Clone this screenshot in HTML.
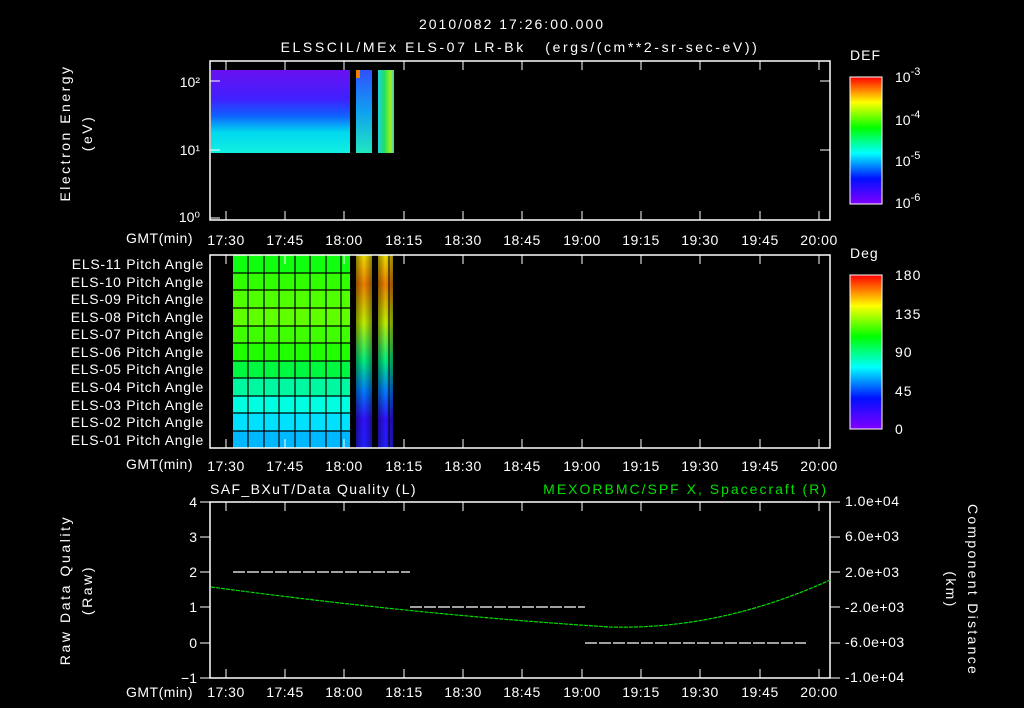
<!DOCTYPE html>
<html><head><style>
html,body{margin:0;padding:0;background:#000;width:1024px;height:708px;overflow:hidden}
svg text{font-family:"Liberation Sans",sans-serif;fill:#fff;font-size:14px}
</style></head><body>
<svg width="1024" height="708" viewBox="0 0 1024 708" xmlns="http://www.w3.org/2000/svg">
<defs>
<linearGradient id="rb" x1="0" y1="1" x2="0" y2="0">
<stop offset="0" stop-color="#8000ff"/><stop offset="0.2" stop-color="#0010ff"/>
<stop offset="0.4" stop-color="#00ffff"/><stop offset="0.6" stop-color="#00ff00"/>
<stop offset="0.8" stop-color="#ffff00"/><stop offset="1" stop-color="#ff0000"/>
</linearGradient>
<linearGradient id="p1" x1="0" y1="0" x2="0" y2="1">
<stop offset="0" stop-color="#6a10f0"/><stop offset="0.35" stop-color="#4020ff"/>
<stop offset="0.55" stop-color="#1060ff"/><stop offset="0.75" stop-color="#00d8f0"/>
<stop offset="1" stop-color="#10f0e0"/>
</linearGradient>
<linearGradient id="p1b" x1="0" y1="0" x2="0" y2="1">
<stop offset="0" stop-color="#3050ff"/><stop offset="0.5" stop-color="#10a0f0"/>
<stop offset="1" stop-color="#20e8c0"/>
</linearGradient>
<linearGradient id="p1c" x1="0" y1="0" x2="1" y2="0">
<stop offset="0" stop-color="#20d0e0"/><stop offset="0.4" stop-color="#20e060"/>
<stop offset="0.8" stop-color="#a0f020"/><stop offset="1" stop-color="#20d0f0"/>
</linearGradient>
<linearGradient id="s2" x1="0" y1="0" x2="0" y2="1">
<stop offset="0" stop-color="#f0e000"/><stop offset="0.15" stop-color="#f08000"/>
<stop offset="0.35" stop-color="#c0f000"/><stop offset="0.55" stop-color="#00f080"/>
<stop offset="0.7" stop-color="#0080ff"/><stop offset="0.85" stop-color="#3010ff"/>
<stop offset="1" stop-color="#2020ff"/>
</linearGradient>
<linearGradient id="sh" x1="0" y1="0" x2="1" y2="0">
<stop offset="0" stop-color="#000" stop-opacity="0.4"/><stop offset="0.5" stop-color="#000" stop-opacity="0"/>
<stop offset="1" stop-color="#000" stop-opacity="0.4"/>
</linearGradient>
</defs>

<text x="512" y="29" text-anchor="middle" font-size="16" letter-spacing="2">2010/082 17:26:00.000</text>
<text x="520" y="52" text-anchor="middle" font-size="16" letter-spacing="2.6" xml:space="preserve">ELSSCIL/MEx ELS-07 LR-Bk   (ergs/(cm**2-sr-sec-eV))</text>

<!-- Panel 1 -->
<rect x="211" y="70" width="139" height="83" fill="url(#p1)"/>
<rect x="356" y="70" width="16" height="83" fill="url(#p1b)"/>
<rect x="356" y="70" width="4" height="8" fill="#f08000"/>
<rect x="378" y="70" width="16" height="83" fill="url(#p1c)"/>
<rect x="210" y="61" width="620" height="159" fill="none" stroke="#fff" stroke-width="1.5"/>
<text x="200" y="87" text-anchor="end">10²</text>
<text x="200" y="155" text-anchor="end">10¹</text>
<text x="200" y="222" text-anchor="end">10⁰</text>
<text transform="translate(70,133) rotate(-90)" text-anchor="middle" font-size="15" letter-spacing="2.5">Electron Energy</text>
<text transform="translate(92,133) rotate(-90)" text-anchor="middle" font-size="15" letter-spacing="2.5">(eV)</text>
<text x="850" y="60" font-size="15" letter-spacing="1">DEF</text>
<rect x="850" y="77" width="32" height="127" fill="url(#rb)" stroke="#fff"/>
<g font-size="15">
<text x="895" y="82">10<tspan dy="-7" font-size="11">-3</tspan></text>
<text x="895" y="125">10<tspan dy="-7" font-size="11">-4</tspan></text>
<text x="895" y="166">10<tspan dy="-7" font-size="11">-5</tspan></text>
<text x="895" y="208">10<tspan dy="-7" font-size="11">-6</tspan></text>
</g>

<!-- Panel 2 -->
<g>
<rect x="233" y="255" width="117" height="193" fill="#20ff00"/>
<rect x="233" y="255" width="117" height="18" fill="#10ff10"/>
<rect x="233" y="273" width="117" height="17" fill="#30ff00"/>
<rect x="233" y="290" width="117" height="18" fill="#50ff00"/>
<rect x="233" y="308" width="117" height="18" fill="#60ff00"/>
<rect x="233" y="326" width="117" height="17" fill="#40ff00"/>
<rect x="233" y="343" width="117" height="18" fill="#20ff00"/>
<rect x="233" y="361" width="117" height="17" fill="#00f840"/>
<rect x="233" y="378" width="117" height="18" fill="#00f8a0"/>
<rect x="233" y="396" width="117" height="17" fill="#00ffe0"/>
<rect x="233" y="413" width="117" height="18" fill="#00e0ff"/>
<rect x="233" y="431" width="117" height="17" fill="#00b8ff"/>
<g stroke="#000" stroke-width="1.2">
<path d="M248 255V448M264 255V448M279 255V448M295 255V448M310 255V448M326 255V448M341 255V448"/>
<path d="M233 273H350M233 290H350M233 308H350M233 326H350M233 343H350M233 361H350M233 378H350M233 396H350M233 413H350M233 431H350"/>
</g>
<rect x="356" y="255" width="16" height="193" fill="url(#s2)"/>
<rect x="378" y="255" width="15" height="193" fill="url(#s2)"/>
<rect x="356" y="255" width="16" height="193" fill="url(#sh)"/>
<rect x="378" y="255" width="15" height="193" fill="url(#sh)"/>
<path d="M389 255V448" stroke="#000" stroke-width="1"/>
</g>
<rect x="210" y="255" width="620" height="193" fill="none" stroke="#fff" stroke-width="1.5"/>
<g text-anchor="end" font-size="13" letter-spacing="0.7">
<text x="204" y="269">ELS-11 Pitch Angle</text>
<text x="204" y="287">ELS-10 Pitch Angle</text>
<text x="204" y="304">ELS-09 Pitch Angle</text>
<text x="204" y="322">ELS-08 Pitch Angle</text>
<text x="204" y="339">ELS-07 Pitch Angle</text>
<text x="204" y="357">ELS-06 Pitch Angle</text>
<text x="204" y="374">ELS-05 Pitch Angle</text>
<text x="204" y="392">ELS-04 Pitch Angle</text>
<text x="204" y="410">ELS-03 Pitch Angle</text>
<text x="204" y="427">ELS-02 Pitch Angle</text>
<text x="204" y="445">ELS-01 Pitch Angle</text>
</g>
<text x="850" y="258" font-size="15" letter-spacing="1">Deg</text>
<rect x="850" y="275" width="32" height="154" fill="url(#rb)" stroke="#fff"/>
<g font-size="15" letter-spacing="1">
<text x="895" y="280">180</text>
<text x="895" y="319">135</text>
<text x="895" y="357">90</text>
<text x="895" y="396">45</text>
<text x="895" y="434">0</text>
</g>

<!-- Panel 3 -->
<text x="210" y="494" font-size="15" letter-spacing="1.4">SAF_BXuT/Data Quality (L)</text>
<text x="828" y="494" text-anchor="end" font-size="15" letter-spacing="2" style="fill:#00e000">MEXORBMC/SPF X, Spacecraft (R)</text>
<rect x="210" y="502" width="620" height="176" fill="none" stroke="#fff" stroke-width="1.5"/>
<g text-anchor="end">
<text x="197" y="507">4</text><text x="197" y="542">3</text><text x="197" y="577">2</text>
<text x="197" y="612">1</text><text x="197" y="648">0</text><text x="197" y="683">−1</text>
</g>
<path d="M200 502H210M200 537H210M200 572H210M200 607H210M200 643H210M200 678H210" stroke="#fff"/>
<g font-size="12" letter-spacing="0.5">
<text x="845" y="506">1.0e+04</text><text x="845" y="541">6.0e+03</text>
<text x="845" y="577">2.0e+03</text><text x="845" y="612">-2.0e+03</text>
<text x="845" y="647">-6.0e+03</text><text x="845" y="682">-1.0e+04</text>
</g>
<path d="M830 502H840M830 537H840M830 572H840M830 607H840M830 643H840M830 678H840" stroke="#fff"/>
<text transform="translate(70,590) rotate(-90)" text-anchor="middle" font-size="15" letter-spacing="2.6">Raw Data Quality</text>
<text transform="translate(92,590) rotate(-90)" text-anchor="middle" font-size="15" letter-spacing="2.6">(Raw)</text>
<text transform="translate(968,590) rotate(90)" text-anchor="middle" font-size="15" letter-spacing="2.3">Component Distance</text>
<text transform="translate(946,590) rotate(90)" text-anchor="middle" font-size="15" letter-spacing="2.3">(km)</text>
<path d="M233 572H410M410 607H585M585 643H806" stroke="#fff" stroke-width="1.2" stroke-dasharray="12 2"/>
<path d="M211 587 Q420 615 610 627 Q720 630 830 580" fill="none" stroke="#00e000" stroke-width="1.2" stroke-dasharray="4 1"/>

<!-- axis labels / ticks -->
<g font-size="13" letter-spacing="0.5">
<text x="193" y="243" text-anchor="end">GMT(min)</text>
<text x="193" y="469" text-anchor="end">GMT(min)</text>
<text x="193" y="697" text-anchor="end">GMT(min)</text>
</g>
<g text-anchor="middle" font-size="14" letter-spacing="0.5">
<text x="226" y="245">17:30</text><text x="285" y="245">17:45</text><text x="344" y="245">18:00</text><text x="404" y="245">18:15</text><text x="463" y="245">18:30</text><text x="522" y="245">18:45</text><text x="582" y="245">19:00</text><text x="641" y="245">19:15</text><text x="700" y="245">19:30</text><text x="760" y="245">19:45</text><text x="819" y="245">20:00</text>
<text x="226" y="471">17:30</text><text x="285" y="471">17:45</text><text x="344" y="471">18:00</text><text x="404" y="471">18:15</text><text x="463" y="471">18:30</text><text x="522" y="471">18:45</text><text x="582" y="471">19:00</text><text x="641" y="471">19:15</text><text x="700" y="471">19:30</text><text x="760" y="471">19:45</text><text x="819" y="471">20:00</text>
<text x="226" y="697">17:30</text><text x="285" y="697">17:45</text><text x="344" y="697">18:00</text><text x="404" y="697">18:15</text><text x="463" y="697">18:30</text><text x="522" y="697">18:45</text><text x="582" y="697">19:00</text><text x="641" y="697">19:15</text><text x="700" y="697">19:30</text><text x="760" y="697">19:45</text><text x="819" y="697">20:00</text>
</g>
<g stroke="#fff" stroke-width="1">
<path d="M226 61v9M285 61v9M344 61v9M404 61v9M463 61v9M522 61v9M582 61v9M641 61v9M700 61v9M760 61v9M819 61v9M226 220v-9M285 220v-9M344 220v-9M404 220v-9M463 220v-9M522 220v-9M582 220v-9M641 220v-9M700 220v-9M760 220v-9M819 220v-9"/>
<path d="M226 255v9M285 255v9M344 255v9M404 255v9M463 255v9M522 255v9M582 255v9M641 255v9M700 255v9M760 255v9M819 255v9M226 448v-9M285 448v-9M344 448v-9M404 448v-9M463 448v-9M522 448v-9M582 448v-9M641 448v-9M700 448v-9M760 448v-9M819 448v-9"/>
<path d="M226 502v9M285 502v9M344 502v9M404 502v9M463 502v9M522 502v9M582 502v9M641 502v9M700 502v9M760 502v9M819 502v9M226 678v-9M285 678v-9M344 678v-9M404 678v-9M463 678v-9M522 678v-9M582 678v-9M641 678v-9M700 678v-9M760 678v-9M819 678v-9"/>
<path d="M210 81h10M210 150h10M210 218h10M830 81h-10M830 150h-10"/>
</g>
</svg>
</body></html>
